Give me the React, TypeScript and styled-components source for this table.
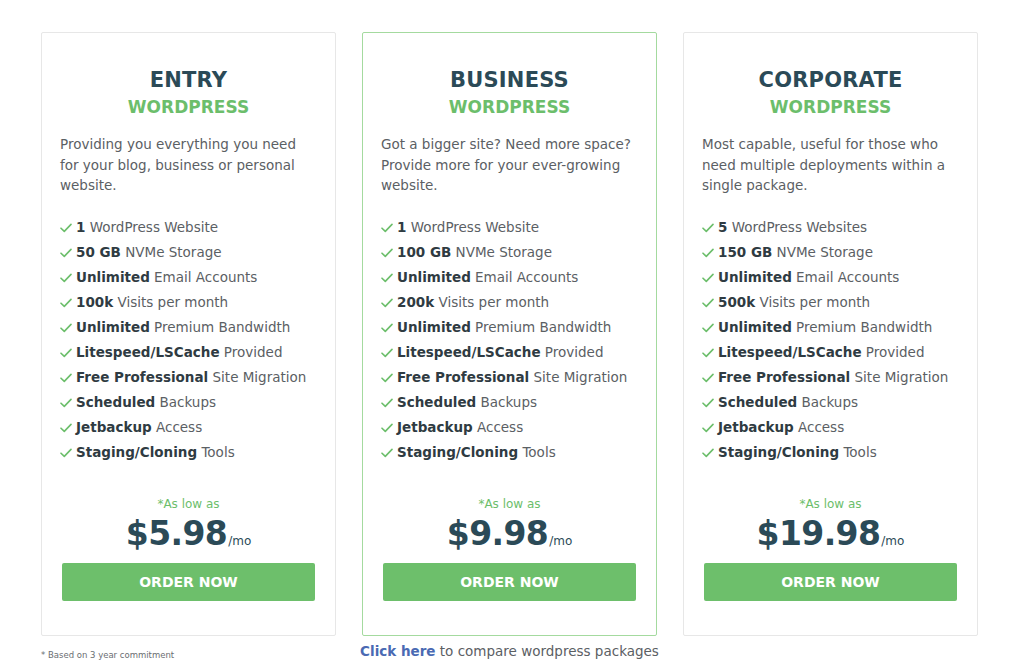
import React from 'react'
import styled, { createGlobalStyle } from 'styled-components';

interface Feature {
    bold: string;
    rest: string;
};

interface Plan {
    id: string;
    name: string;
    text: string;
    price: string;
    featured?: boolean;
    features: Feature[];
};

const common = (site: string, storage: string, visits: string): Feature[] => [
    { bold: site.split(' ')[0], rest: site.slice(site.indexOf(' ') + 1) },
    { bold: storage, rest: 'NVMe Storage' },
    { bold: 'Unlimited', rest: 'Email Accounts' },
    { bold: visits, rest: 'Visits per month' },
    { bold: 'Unlimited', rest: 'Premium Bandwidth' },
    { bold: 'Litespeed/LSCache', rest: 'Provided' },
    { bold: 'Free Professional', rest: 'Site Migration' },
    { bold: 'Scheduled', rest: 'Backups' },
    { bold: 'Jetbackup', rest: 'Access' },
    { bold: 'Staging/Cloning', rest: 'Tools' },
];

const plans: Plan[] = [
    {
        id: 'entry',
        name: 'ENTRY',
        text: 'Providing you everything you need for your blog, business or personal website.',
        price: '$5.98',
        features: common('1 WordPress Website', '50 GB', '100k'),
    },
    {
        id: 'business',
        name: 'BUSINESS',
        text: 'Got a bigger site? Need more space? Provide more for your ever-growing website.',
        price: '$9.98',
        featured: true,
        features: common('1 WordPress Website', '100 GB', '200k'),
    },
    {
        id: 'corporate',
        name: 'CORPORATE',
        text: 'Most capable, useful for those who need multiple deployments within a single package.',
        price: '$19.98',
        features: common('5 WordPress Websites', '150 GB', '500k'),
    },
];

const Check = () => (
    <CheckIcon viewBox="0 0 12 10" width="12" height="10">
        <path d="M1 5.2 L4.3 8.4 L11 1.4" fill="none" stroke="#6cbe6b" strokeWidth="1.6" strokeLinecap="round" strokeLinejoin="round" />
    </CheckIcon>
);

const App: React.FC = () => {
    return (
        <>
            <GlobalStyle />
            <Page>
                <CardGrid>
                    {plans.map((plan) => (
                        <Card key={plan.id} $featured={plan.featured}>
                            <PlanName>{plan.name}</PlanName>
                            <PlanType>WORDPRESS</PlanType>
                            <Description>{plan.text}</Description>
                            <FeatureList>
                                {plan.features.map((f, i) => (
                                    <FeatureRow key={i}>
                                        <Check />
                                        <span><b>{f.bold}</b> {f.rest}</span>
                                    </FeatureRow>
                                ))}
                            </FeatureList>
                            <LowAs>*As low as</LowAs>
                            <Price>
                                <Amount>{plan.price}</Amount>
                                <PerMonth>/mo</PerMonth>
                            </Price>
                            <OrderButton>ORDER NOW</OrderButton>
                        </Card>
                    ))}
                </CardGrid>
                <FooterRow>
                    <Note>* Based on 3 year commitment</Note>
                    <Compare><a>Click here</a> to compare wordpress packages</Compare>
                </FooterRow>
            </Page>
        </>
    )
};

const GlobalStyle = createGlobalStyle`
    body {
        margin: 0;
        background: #ffffff;
        font-family: "DejaVu Sans", "Open Sans", sans-serif;
        color: #555a5e;
    }
`;

const Page = styled.div`
    width: 937px;
    margin-left: 41px;
    padding-top: 32px;
`;

const CardGrid = styled.div`
    display: grid;
    grid-template-columns: repeat(3, 295px);
    column-gap: 26px;
`;

const Card = styled.div<{ $featured?: boolean }>`
    box-sizing: border-box;
    height: 604px;
    border: 1px solid ${(p) => (p.$featured ? '#a4da9f' : '#e7e7e7')};
    border-radius: 2px;
    padding: 33px 18px 0;
    display: flex;
    flex-direction: column;
`;

const PlanName = styled.div`
    text-align: center;
    font-size: 21px;
    font-weight: 700;
    line-height: 28px;
    color: #2b4a57;
    letter-spacing: 0.2px;
`;

const PlanType = styled.div`
    text-align: center;
    font-size: 17px;
    font-weight: 700;
    line-height: 24px;
    margin-top: 1px;
    color: #6cbe6b;
`;

const Description = styled.p`
    margin: 15px 0 0;
    font-size: 13.5px;
    line-height: 20.5px;
    color: #5b6064;
`;

const FeatureList = styled.div`
    margin-top: 19px;
    display: flex;
    flex-direction: column;
`;

const FeatureRow = styled.div`
    display: flex;
    align-items: center;
    gap: 4px;
    height: 25px;
    font-size: 13.5px;
    color: #5b6064;

    b {
        color: #2f3b42;
        font-weight: 700;
    }
`;

const CheckIcon = styled.svg`
    flex-shrink: 0;
    margin-top: 2px;
`;

const LowAs = styled.div`
    margin-top: 30px;
    text-align: center;
    font-size: 12px;
    line-height: 18px;
    color: #6cbe6b;
`;

const Price = styled.div`
    margin-top: 1px;
    height: 40px;
    display: flex;
    justify-content: center;
    align-items: baseline;
    color: #2b4a57;
`;

const Amount = styled.span`
    font-size: 33px;
    font-weight: 700;
    line-height: 40px;
    letter-spacing: -0.6px;
`;

const PerMonth = styled.span`
    font-size: 12px;
    line-height: 12px;
    margin-left: 1px;
`;

const OrderButton = styled.button`
    margin: 9px 2px 0;
    height: 38px;
    border: none;
    border-radius: 2px;
    background: #6dbf6b;
    color: #ffffff;
    font-family: inherit;
    font-size: 14px;
    font-weight: 700;
    cursor: pointer;
`;

const FooterRow = styled.div`
    display: grid;
    grid-template-columns: 295px 1fr 295px;
    align-items: start;
`;

const Note = styled.div`
    margin-top: 14px;
    font-size: 8.5px;
    color: #6a6e72;
`;

const Compare = styled.div`
    margin-top: 5px;
    text-align: center;
    font-size: 13.5px;
    line-height: 20px;
    color: #5b6064;
    white-space: nowrap;

    a {
        color: #4a6ab3;
        font-weight: 700;
        cursor: pointer;
    }
`;

export default App;
